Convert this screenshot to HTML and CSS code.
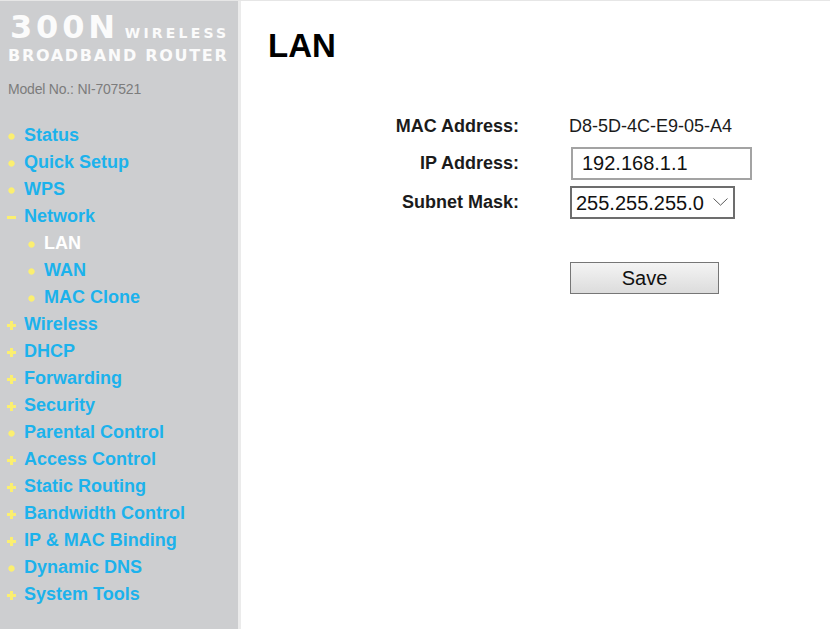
FILE: index.html
```
<!DOCTYPE html>
<html lang="en">
<head>
  <meta charset="UTF-8" />
  <title>LAN</title>
  <link rel="stylesheet" href="styles.css">
</head>
<body>

<div class="frame">
  <aside class="side">
    <div class="logo">
      <div class="logo-top">300N<span class="logo-small">WIRELESS</span></div>
      <div class="logo-sub">BROADBAND ROUTER</div>
    </div>
    <div class="model">Model No.: NI-707521</div>

    <ul class="menu">
      <li><span class="mark dot"></span>Status</li>
      <li><span class="mark dot"></span>Quick Setup</li>
      <li><span class="mark dot"></span>WPS</li>
      <li><span class="mark minus"></span>Network</li>
      <li class="sub active"><span class="mark dot"></span>LAN</li>
      <li class="sub"><span class="mark dot"></span>WAN</li>
      <li class="sub"><span class="mark dot"></span>MAC Clone</li>
      <li><span class="mark plus"></span>Wireless</li>
      <li><span class="mark plus"></span>DHCP</li>
      <li><span class="mark plus"></span>Forwarding</li>
      <li><span class="mark plus"></span>Security</li>
      <li><span class="mark dot"></span>Parental Control</li>
      <li><span class="mark plus"></span>Access Control</li>
      <li><span class="mark plus"></span>Static Routing</li>
      <li><span class="mark plus"></span>Bandwidth Control</li>
      <li><span class="mark plus"></span>IP &amp; MAC Binding</li>
      <li><span class="mark dot"></span>Dynamic DNS</li>
      <li><span class="mark plus"></span>System Tools</li>
    </ul>
  </aside>

  <main class="content">
    <h1>LAN</h1>

    <form class="lan-form" onsubmit="return false">
      <label class="row-label">MAC Address:</label>
      <div class="mac">D8-5D-4C-E9-05-A4</div>

      <label class="row-label" for="ip">IP Address:</label>
      <div><input type="text" id="ip" class="text-box" value="192.168.1.1"></div>

      <label class="row-label" for="mask">Subnet Mask:</label>
      <div class="select-wrap">
        <select id="mask" class="select-box">
          <option>255.255.255.0</option>
          <option>255.255.0.0</option>
          <option>255.0.0.0</option>
        </select>
        <svg class="chevron" width="15" height="8" viewBox="0 0 15 8">
          <path d="M0.5 0.5 L7.5 7.2 L14.5 0.5" fill="none" stroke="#5a5a5a" stroke-width="1"/>
        </svg>
      </div>

      <div></div>
      <div class="save-row"><button class="save-btn">Save</button></div>
    </form>
  </main>
</div>

</body>
</html>
```

FILE: styles.css
```
html, body {
  margin: 0;
  padding: 0;
}

body {
  font-family: "Liberation Sans", Arial, sans-serif;
  background: #fff;
  border-top: 1px solid #e6e6e6;
}

.frame {
  display: flex;
  height: 628px;
}

/* left menu */
.side {
  width: 238px;
  flex-shrink: 0;
  background: #cdced0;
  border-right: 3px solid #ebebeb;
}

.logo {
  padding: 10px 0 0 10px;
  color: #fbfbfb;
  font-family: "DejaVu Sans", sans-serif;
  font-weight: bold;
}

.logo-top {
  font-size: 32px;
  line-height: 32px;
  letter-spacing: 3.8px;
  white-space: nowrap;
}

.logo-small {
  font-size: 14px;
  line-height: 1;
  letter-spacing: 3.2px;
  margin-left: 6px;
}

.logo-sub {
  margin: 4px 0 0 -2px;
  font-size: 16px;
  line-height: 18px;
  letter-spacing: 1.7px;
  white-space: nowrap;
}

.model {
  margin: 16px 0 0 8px;
  font-size: 14px;
  line-height: 16px;
  letter-spacing: -0.2px;
  color: #7c7c7c;
}

.menu {
  list-style: none;
  margin: 25px 0 0 0;
  padding: 0;
}

.menu li {
  display: flex;
  align-items: center;
  height: 27px;
  padding-left: 7px;
  font-size: 18px;
  font-weight: bold;
  color: #1cb2ec;
  white-space: nowrap;
}

.menu li.sub {
  padding-left: 27px;
}

.menu li.active {
  color: #fff;
}

.mark {
  width: 9px;
  height: 9px;
  margin: 2px 8px 0 0;
}

.mark.dot {
  background: radial-gradient(circle, #fbef70 2.7px, rgba(251, 239, 112, 0) 3.6px);
}

.mark.plus {
  background:
    linear-gradient(#fbef70, #fbef70) center / 9px 3px no-repeat,
    linear-gradient(#fbef70, #fbef70) center / 3px 9px no-repeat;
}

.mark.minus {
  background: linear-gradient(#fbef70, #fbef70) center / 10px 3px no-repeat;
}

/* main area */
.content {
  flex: 1;
  padding: 25px 0 0 27px;
}

h1 {
  margin: 0;
  font-size: 33px;
  line-height: 40px;
  font-weight: bold;
  color: #000;
}

.lan-form {
  margin-top: 45px;
  display: grid;
  grid-template-columns: 251px auto;
  grid-template-rows: 30px 33px 33px;
  column-gap: 51px;
  row-gap: 6px;
  align-items: center;
}

.row-label {
  text-align: right;
  font-size: 18px;
  font-weight: bold;
  color: #1b1b1b;
}

.mac {
  margin-left: -1px;
  font-size: 18px;
  color: #1b1b1b;
}

.text-box {
  box-sizing: border-box;
  width: 181px;
  height: 33px;
  margin: 0 0 0 1px;
  padding: 0 0 0 9px;
  border: 2px solid #a3a3a3;
  font-family: "Liberation Sans", Arial, sans-serif;
  font-size: 20px;
  color: #111;
  outline: none;
}

.select-wrap {
  position: relative;
  width: 165px;
}

.select-box {
  appearance: none;
  box-sizing: border-box;
  width: 165px;
  height: 33px;
  margin: 0;
  padding: 0 0 0 4px;
  border: 2px solid #6d6d6d;
  border-radius: 0;
  background: #fff;
  font-family: "Liberation Sans", Arial, sans-serif;
  font-size: 20px;
  color: #111;
}

.chevron {
  position: absolute;
  left: 143px;
  top: 12px;
}

.save-row {
  padding-top: 37px;
}

.save-btn {
  box-sizing: border-box;
  width: 149px;
  height: 32px;
  margin: 0;
  border: 1px solid #767676;
  background: linear-gradient(#f4f4f4, #dcdcdc);
  font-family: "Liberation Sans", Arial, sans-serif;
  font-size: 20px;
  color: #111;
  cursor: pointer;
}
```
